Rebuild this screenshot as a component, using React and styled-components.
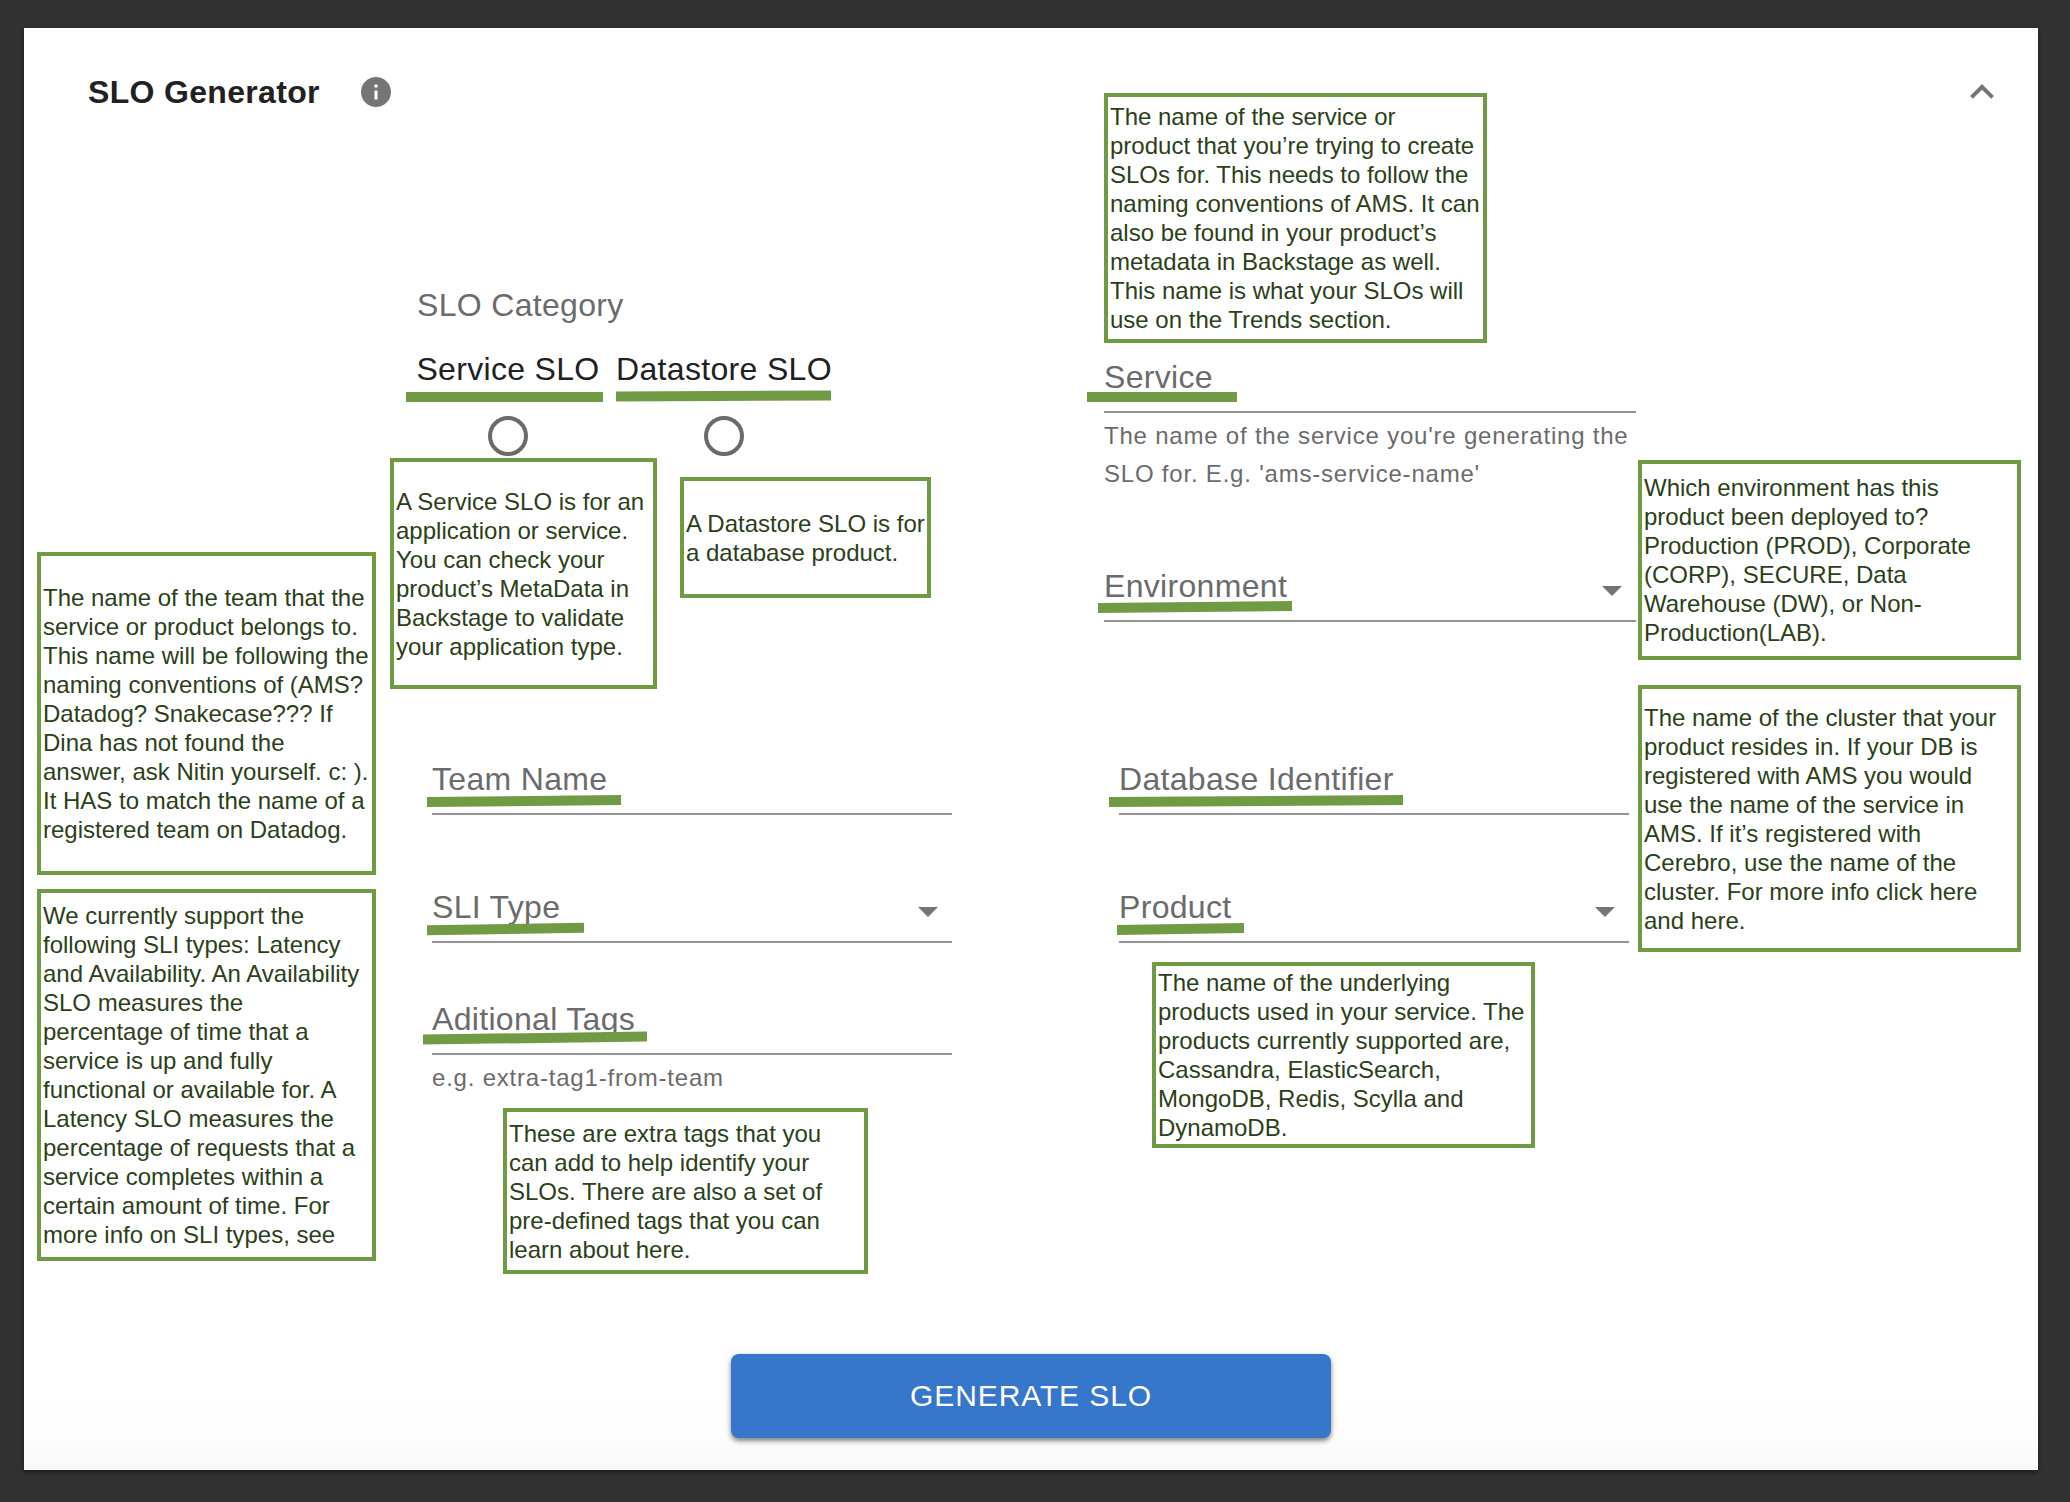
import React from "react";
import styled, { createGlobalStyle } from "styled-components";

const green = "#719a44";
const grey = "#6b6b6b";

const GlobalStyle = createGlobalStyle`
  *, *::before, *::after { box-sizing: border-box; }
  body {
    margin: 0;
    background: #323232;
    font-family: "Liberation Sans", Arial, Helvetica, sans-serif;
    color: #212121;
  }
`;

const Page = styled.div`
  min-height: 100vh;
  padding: 28px 32px 32px 24px;
`;

const Panel = styled.form`
  display: grid;
  grid-template-columns: 339px minmax(0, 728fr) minmax(0, 534fr) 383px;
  grid-template-rows: 128px auto auto;
  padding: 0 17px 32px 13px;
  background: linear-gradient(to top, #f8f8f8, #fdfdfd 30px, #ffffff 80px);
  box-shadow: 0 2px 5px rgba(0, 0, 0, 0.5);
`;

const Heading = styled.header`
  grid-column: 1 / 3;
  display: flex;
  align-items: center;
  gap: 38px;
  padding-left: 51px;
`;

const Title = styled.h1`
  margin: 0;
  font-size: 32px;
  line-height: 40px;
  font-weight: 700;
  letter-spacing: 0.01em;
`;

const IconButton = styled.button`
  display: flex;
  padding: 0;
  border: 0;
  background: none;
  color: #757575;
`;

const HeadingActions = styled.div`
  grid-column: 4;
  grid-row: 1;
  display: flex;
  align-items: center;
  justify-content: flex-end;
  padding-right: 15px;
`;

const SideNotes = styled.aside`
  grid-column: ${(p) => p.$column};
  grid-row: 2;
  display: flex;
  flex-direction: column;
  gap: ${(p) => p.$gap}px;
  padding-top: ${(p) => p.$top}px;
`;

const DetailsColumn = styled.div`
  grid-column: 2;
  grid-row: 2;
  padding: 129px 0 0 14px;
`;

const TargetColumn = styled.div`
  grid-column: 3;
  grid-row: 1 / 3;
  padding-top: 65px;
`;

const NoteBox = styled.p`
  display: flex;
  align-items: center;
  width: ${(p) => (p.$width ? `${p.$width}px` : "auto")};
  min-height: ${(p) => p.$height}px;
  margin: ${(p) => p.$top || 0}px 0 0 ${(p) => p.$left || 0}px;
  padding: 0 2px;
  border: 4px solid ${green};
  color: #2b3f18;
  font-size: 24px;
  line-height: 29px;
  white-space: pre;
`;

const Category = styled.fieldset`
  margin: 0;
  padding: 0 0 0 27px;
  border: 0;
`;

const Legend = styled.legend`
  padding: 0;
  margin-bottom: 24px;
  color: ${grey};
  font-size: 32px;
  line-height: 40px;
  letter-spacing: 0.01em;
`;

const Options = styled.div`
  display: grid;
  grid-template-columns: 182px 218px;
  column-gap: 16px;
`;

const Option = styled.label`
  display: flex;
  flex-direction: column;
  align-items: center;
  gap: 27px;
  font-size: 32px;
  line-height: 40px;
  letter-spacing: 0.01em;
  white-space: nowrap;
`;

const Radio = styled.input`
  appearance: none;
  width: 40px;
  height: 40px;
  margin: 0;
  border: 4px solid ${grey};
  border-radius: 50%;
  &:checked { background: radial-gradient(${grey} 45%, transparent 50%); }
`;

const Marked = styled.span`
  position: relative;
`;

/* Marker stroke drawn over the bottom of a label */
const Stroke = styled.span`
  position: absolute;
  top: ${(p) => p.$top}px;
  left: -${(p) => p.$before}px;
  width: ${(p) => p.$width}px;
  height: 10px;
  background: ${green};
  transform: skewY(-${(p) => p.$tilt || 0}deg);
  pointer-events: none;
`;

const NoteRow = styled.div`
  display: flex;
  align-items: flex-start;
  gap: 23px;
  margin: 2px 0 70px;
`;

const Fields = styled.div`
  width: ${(p) => p.$width}px;
  max-width: 100%;
  margin: ${(p) => p.$top || 0}px 0 0 ${(p) => p.$left || 0}px;
`;

const Control = styled.div`
  display: flex;
  align-items: flex-start;
  height: 56px;
  margin-top: ${(p) => p.$top || 0}px;
  border-bottom: 2px solid #949494;
`;

const FieldLabel = styled.label`
  position: relative;
  color: ${grey};
  font-size: 32px;
  line-height: 40px;
  letter-spacing: 0.01em;
  white-space: nowrap;
`;

const TextInput = styled.input`
  flex: 1;
  min-width: 0;
  height: 40px;
  padding: 0 0 0 16px;
  border: 0;
  outline: 0;
  background: none;
  font: inherit;
  font-size: 32px;
`;

const Select = styled.select`
  flex: 1;
  min-width: 0;
  height: 40px;
  padding: 0 0 0 16px;
  border: 0;
  outline: 0;
  appearance: none;
  background: none;
  font: inherit;
  font-size: 32px;
`;

const Helper = styled.p`
  margin: 4px 0 0;
  color: ${grey};
  font-size: 24px;
  line-height: 38px;
  letter-spacing: 0.033em;
`;

const Footer = styled.div`
  grid-column: 1 / -1;
  display: flex;
  justify-content: center;
  padding: 80px 0 0 4px;
`;

const SubmitButton = styled.button`
  width: 600px;
  height: 84px;
  border: 0;
  border-radius: 8px;
  background: #3676cb;
  color: #ffffff;
  font: inherit;
  font-size: 30px;
  letter-spacing: 0.03em;
  text-transform: uppercase;
  box-shadow: 0 3px 4px rgba(0, 0, 0, 0.4), 0 2px 10px rgba(0, 0, 0, 0.14);
`;

function InfoIcon() {
  return (
    <svg width="36" height="36" viewBox="0 0 24 24" fill="currentColor" aria-hidden="true">
      <path d="M12 2C6.48 2 2 6.48 2 12s4.48 10 10 10 10-4.48 10-10S17.52 2 12 2zm1 15h-2v-6h2v6zm0-8h-2V7h2v2z" />
    </svg>
  );
}

function CollapseIcon() {
  return (
    <svg width="48" height="48" viewBox="0 0 24 24" fill="currentColor" aria-hidden="true">
      <path d="M12 8l-6 6 1.41 1.41L12 10.83l4.59 4.58L18 14z" />
    </svg>
  );
}

function ArrowIcon() {
  return (
    <svg width="48" height="48" viewBox="0 0 24 24" fill="#757575" aria-hidden="true">
      <path d="M7 10l5 5 5-5z" />
    </svg>
  );
}

function Note({ lines, ...box }) {
  return <NoteBox {...box}>{lines.join("\n")}</NoteBox>;
}

function Field({ id, label, stroke, options, top }) {
  return (
    <Control $top={top}>
      <FieldLabel htmlFor={id}>
        {label}
        <Stroke $top={stroke.top} $before={stroke.before} $width={stroke.width} $tilt={stroke.tilt} />
      </FieldLabel>
      {options ? (
        <>
          <Select id={id} defaultValue="">
            <option value="" />
            {options.map((o) => (
              <option key={o}>{o}</option>
            ))}
          </Select>
          <ArrowIcon />
        </>
      ) : (
        <TextInput id={id} type="text" />
      )}
    </Control>
  );
}

const notes = {
  team: [
    "The name of the team that the",
    "service or product belongs to.",
    "This name will be following the",
    "naming conventions of (AMS?",
    "Datadog? Snakecase??? If",
    "Dina has not found the",
    "answer, ask Nitin yourself. c: ).",
    "It HAS to match the name of a",
    "registered team on Datadog.",
  ],
  sli: [
    "We currently support the",
    "following SLI types: Latency",
    "and Availability. An Availability",
    "SLO measures the",
    "percentage of time that a",
    "service is up and fully",
    "functional or available for. A",
    "Latency SLO measures the",
    "percentage of requests that a",
    "service completes within a",
    "certain amount of time. For",
    "more info on SLI types, see",
  ],
  serviceSlo: [
    "A Service SLO is for an",
    "application or service.",
    "You can check your",
    "product’s MetaData in",
    "Backstage to validate",
    "your application type.",
  ],
  datastoreSlo: ["A Datastore SLO is for", "a database product."],
  tags: [
    "These are extra tags that you",
    "can add to help identify your",
    "SLOs. There are also a set of",
    "pre-defined tags that you can",
    "learn about here.",
  ],
  service: [
    "The name of the service or",
    "product that you’re trying to create",
    "SLOs for. This needs to follow the",
    "naming conventions of AMS. It can",
    "also be found in your product’s",
    "metadata in Backstage as well.",
    "This name is what your SLOs will",
    "use on the Trends section.",
  ],
  product: [
    "The name of the underlying",
    "products used in your service. The",
    "products currently supported are,",
    "Cassandra, ElasticSearch,",
    "MongoDB, Redis, Scylla and",
    "DynamoDB.",
  ],
  environment: [
    "Which environment has this",
    "product been deployed to?",
    "Production (PROD), Corporate",
    "(CORP), SECURE, Data",
    "Warehouse (DW), or Non-",
    "Production(LAB).",
  ],
  cluster: [
    "The name of the cluster that your",
    "product resides in. If your DB is",
    "registered with AMS you would",
    "use the name of the service in",
    "AMS. If it’s registered with",
    "Cerebro, use the name of the",
    "cluster. For more info click here",
    "and here.",
  ],
};

export default function App() {
  return (
    <Page>
      <GlobalStyle />
      <Panel onSubmit={(e) => e.preventDefault()}>
        <Heading>
          <Title>SLO Generator</Title>
          <IconButton type="button" aria-label="About the SLO generator">
            <InfoIcon />
          </IconButton>
        </Heading>
        <HeadingActions>
          <IconButton type="button" aria-label="Collapse">
            <CollapseIcon />
          </IconButton>
        </HeadingActions>

        <SideNotes $column={1} $top={396} $gap={14}>
          <Note lines={notes.team} $height={323} />
          <Note lines={notes.sli} $height={372} />
        </SideNotes>

        <DetailsColumn>
          <Category>
            <Legend>SLO Category</Legend>
            <Options>
              <Option>
                <Marked>
                  Service SLO
                  <Stroke $top={43} $before={10} $width={197} />
                </Marked>
                <Radio type="radio" name="category" value="service" />
              </Option>
              <Option>
                <Marked>
                  Datastore SLO
                  <Stroke $top={42} $before={0} $width={215} $tilt={0.3} />
                </Marked>
                <Radio type="radio" name="category" value="datastore" />
              </Option>
            </Options>
          </Category>
          <NoteRow>
            <Note lines={notes.serviceSlo} $width={267} $height={231} />
            <Note lines={notes.datastoreSlo} $width={251} $height={121} $top={19} />
          </NoteRow>
          <Fields $width={520} $left={42}>
            <Field id="team" label="Team Name" stroke={{ top: 37, before: 5, width: 194, tilt: 0.6 }} />
            <Field
              id="sli"
              label="SLI Type"
              top={72}
              stroke={{ top: 37, before: 5, width: 157, tilt: 1 }}
              options={["Latency", "Availability"]}
            />
            <Field id="tags" label="Aditional Tags" top={56} stroke={{ top: 34, before: 9, width: 224, tilt: 0.8 }} />
            <Helper>e.g. extra-tag1-from-team</Helper>
            <Note lines={notes.tags} $width={365} $height={166} $top={11} $left={71} />
          </Fields>
        </DetailsColumn>

        <TargetColumn>
          <Note lines={notes.service} $width={383} $height={250} />
          <Fields $width={532} $top={14}>
            <Field id="service" label="Service" stroke={{ top: 35, before: 17, width: 150 }} />
            <Helper>The name of the service you're generating the SLO for. E.g. 'ams-service-name'</Helper>
            <Field
              id="environment"
              label="Environment"
              top={73}
              stroke={{ top: 36, before: 6, width: 194, tilt: 0.6 }}
              options={["PROD", "CORP", "SECURE", "DW", "LAB"]}
            />
          </Fields>
          <Fields $width={510} $top={137} $left={15}>
            <Field id="database" label="Database Identifier" stroke={{ top: 37, before: 10, width: 294, tilt: 0.4 }} />
            <Field
              id="product"
              label="Product"
              top={72}
              stroke={{ top: 37, before: 2, width: 127, tilt: 1 }}
              options={["Cassandra", "ElasticSearch", "MongoDB", "Redis", "Scylla", "DynamoDB"]}
            />
          </Fields>
          <Note lines={notes.product} $width={383} $height={186} $top={19} $left={48} />
        </TargetColumn>

        <SideNotes $column={4} $top={304} $gap={25}>
          <Note lines={notes.environment} $height={200} />
          <Note lines={notes.cluster} $height={267} />
        </SideNotes>

        <Footer>
          <SubmitButton type="submit">Generate SLO</SubmitButton>
        </Footer>
      </Panel>
    </Page>
  );
}
